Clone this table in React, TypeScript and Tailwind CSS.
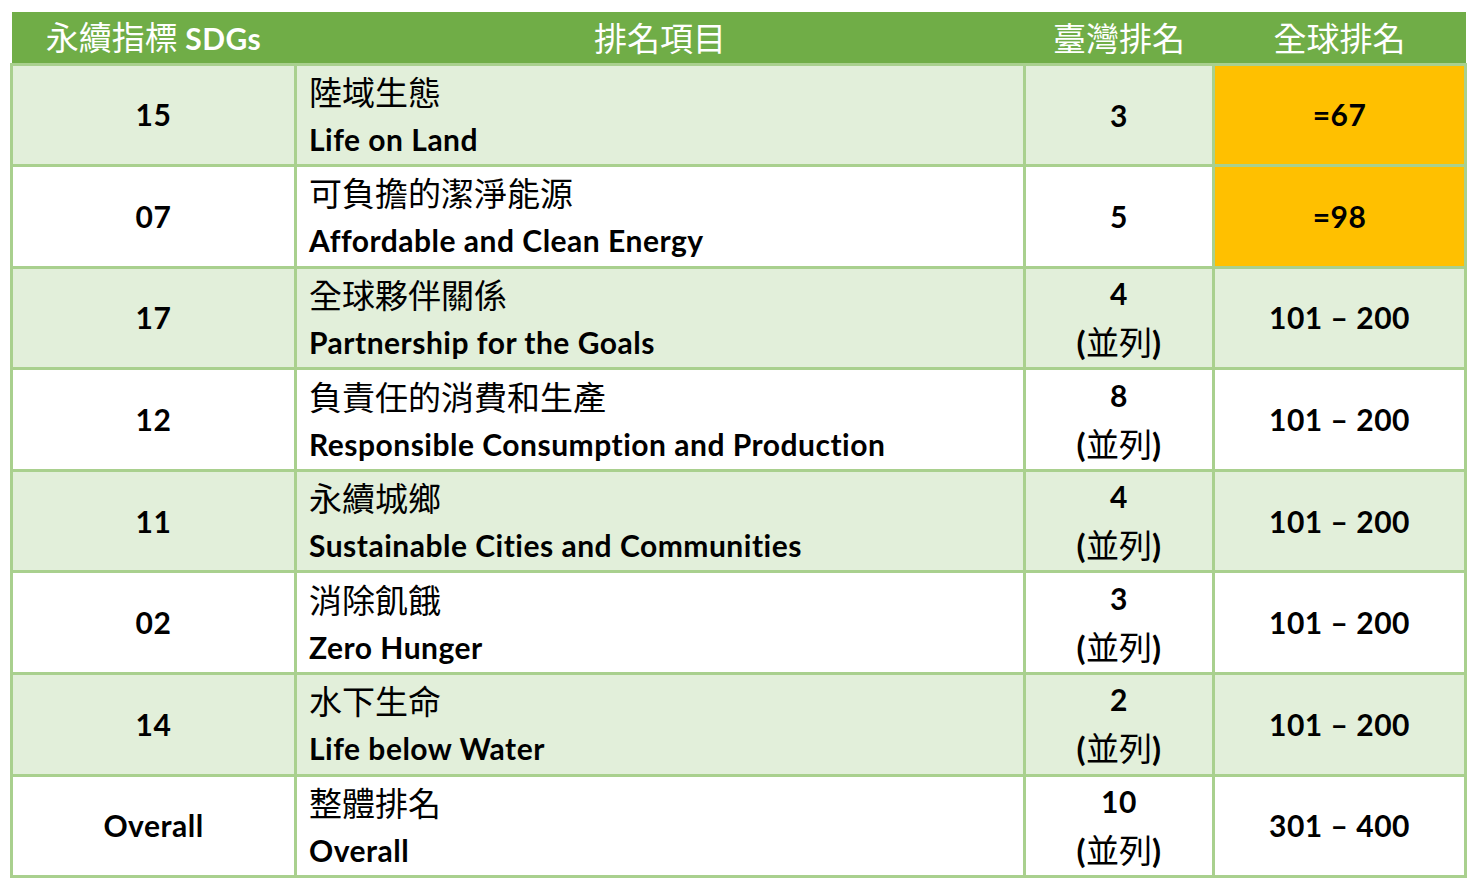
import React from "react"

type Row = {
  sdg: string
  zh: string
  en: string
  tw: string
  tie: boolean
  global: string
  highlight: boolean
}

const rows: Row[] = [
  { sdg: "15", zh: "陸域生態", en: "Life on Land", tw: "3", tie: false, global: "=67", highlight: true },
  { sdg: "07", zh: "可負擔的潔淨能源", en: "Affordable and Clean Energy", tw: "5", tie: false, global: "=98", highlight: true },
  { sdg: "17", zh: "全球夥伴關係", en: "Partnership for the Goals", tw: "4", tie: true, global: "101 – 200", highlight: false },
  { sdg: "12", zh: "負責任的消費和生產", en: "Responsible Consumption and Production", tw: "8", tie: true, global: "101 – 200", highlight: false },
  { sdg: "11", zh: "永續城鄉", en: "Sustainable Cities and Communities", tw: "4", tie: true, global: "101 – 200", highlight: false },
  { sdg: "02", zh: "消除飢餓", en: "Zero Hunger", tw: "3", tie: true, global: "101 – 200", highlight: false },
  { sdg: "14", zh: "水下生命", en: "Life below Water", tw: "2", tie: true, global: "101 – 200", highlight: false },
  { sdg: "Overall", zh: "整體排名", en: "Overall", tw: "10", tie: true, global: "301 – 400", highlight: false },
]

const latin = "font-['Lato','Noto_Sans_CJK_TC',sans-serif] font-bold tracking-[0.5px]"
const cjk = "font-['Noto_Sans_CJK_TC','Noto_Sans_CJK_SC',sans-serif] font-normal"

export default function App() {
  return (
    <div className="min-h-[880px] w-[1473px] bg-white pl-[10px] pt-[12px]">
      <table className="w-[1454px] table-fixed border-collapse text-black">
        <colgroup>
          <col className="w-[284px]" />
          <col className="w-[729px]" />
          <col className="w-[189px]" />
          <col className="w-[252px]" />
        </colgroup>
        <thead>
          <tr className="h-[52px] bg-[#70AD47] text-white">
            <th className={`text-center text-[33px] leading-[48px] ${cjk}`}>
              永續指標 <span className={`text-[30px] ${latin}`}>SDGs</span>
            </th>
            <th className={`text-center text-[33px] leading-[48px] ${cjk}`}>排名項目</th>
            <th className={`text-center text-[33px] leading-[48px] ${cjk}`}>臺灣排名</th>
            <th className={`text-center text-[33px] leading-[48px] ${cjk}`}>全球排名</th>
          </tr>
        </thead>
        <tbody>
          {rows.map((r, i) => {
            const bg = i % 2 === 0 ? "bg-[#E2EFDA]" : "bg-white"
            return (
              <tr key={r.sdg} className={`h-[101.6px] ${bg}`}>
                <td className={`border-[3px] border-[#A9D08E] p-0 text-center text-[30px] ${latin}`}>
                  {r.sdg}
                </td>
                <td className="border-[3px] border-[#A9D08E] p-0 pl-[12px] align-middle">
                  <div className="flex flex-col leading-[48px]">
                    <span className={`text-[33px] ${cjk}`}>{r.zh}</span>
                    <span className={`text-[30px] ${latin}`}>{r.en}</span>
                  </div>
                </td>
                <td className="border-[3px] border-[#A9D08E] p-0 text-center">
                  <div className="flex flex-col items-center leading-[48px]">
                    <span className={`text-[30px] ${latin}`}>{r.tw}</span>
                    {r.tie && (
                      <span className="text-[33px]">
                        <span className={latin}>(</span>
                        <span className={cjk}>並列</span>
                        <span className={latin}>)</span>
                      </span>
                    )}
                  </div>
                </td>
                <td
                  className={`border-[3px] border-[#A9D08E] p-0 text-center text-[30px] ${latin} ${
                    r.highlight ? "bg-[#FFC000]" : ""
                  }`}
                >
                  {r.global}
                </td>
              </tr>
            )
          })}
        </tbody>
      </table>
    </div>
  )
}
